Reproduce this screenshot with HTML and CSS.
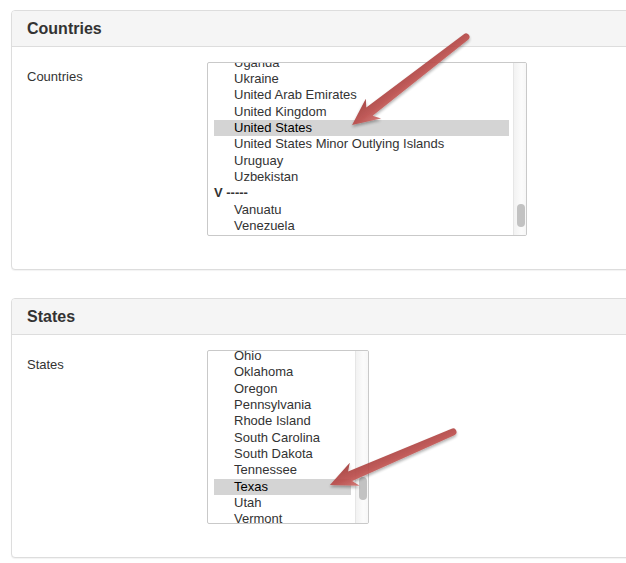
FILE: index.html
```html
<!DOCTYPE html>
<html>
<head>
<meta charset="utf-8">
<title>Countries and States</title>
<link rel="stylesheet" href="styles.css">
</head>
<body>
<div class="page">
  <section class="panel">
    <div class="panel-heading"><h3 class="panel-title">Countries</h3></div>
    <div class="panel-body">
      <div class="form-group">
        <label class="control-label">Countries</label>
        <div class="listbox listbox-wide">
          <div class="list list-countries">
            <div class="opt">Uganda</div>
            <div class="opt">Ukraine</div>
            <div class="opt">United Arab Emirates</div>
            <div class="opt">United Kingdom</div>
            <div class="opt selected">United States</div>
            <div class="opt">United States Minor Outlying Islands</div>
            <div class="opt">Uruguay</div>
            <div class="opt">Uzbekistan</div>
            <div class="group">V -----</div>
            <div class="opt">Vanuatu</div>
            <div class="opt">Venezuela</div>
            <div class="opt">Vietnam</div>
          </div>
          <div class="scrollbar"><div class="thumb thumb-countries"></div></div>
        </div>
      </div>
    </div>
  </section>

  <section class="panel">
    <div class="panel-heading"><h3 class="panel-title">States</h3></div>
    <div class="panel-body">
      <div class="form-group">
        <label class="control-label">States</label>
        <div class="listbox listbox-narrow">
          <div class="list list-states">
            <div class="opt">Ohio</div>
            <div class="opt">Oklahoma</div>
            <div class="opt">Oregon</div>
            <div class="opt">Pennsylvania</div>
            <div class="opt">Rhode Island</div>
            <div class="opt">South Carolina</div>
            <div class="opt">South Dakota</div>
            <div class="opt">Tennessee</div>
            <div class="opt selected">Texas</div>
            <div class="opt">Utah</div>
            <div class="opt">Vermont</div>
            <div class="opt">Virginia</div>
          </div>
          <div class="scrollbar"><div class="thumb thumb-states"></div></div>
        </div>
      </div>
    </div>
  </section>
</div>

<svg class="arrows" width="626" height="563" viewBox="0 0 626 563" xmlns="http://www.w3.org/2000/svg">
  <defs>
    <linearGradient id="ag" x1="0" y1="0" x2="0" y2="1">
      <stop offset="0" stop-color="#cf6f6c"/>
      <stop offset="0.45" stop-color="#bb4d4b"/>
      <stop offset="1" stop-color="#a13b39"/>
    </linearGradient>
    <filter id="sh" x="-20%" y="-20%" width="140%" height="140%">
      <feDropShadow dx="0" dy="2" stdDeviation="1.6" flood-color="#000" flood-opacity="0.35"/>
    </filter>
  </defs>
  <g filter="url(#sh)" opacity="0.92">
    <path transform="translate(466 37) rotate(142.3)" fill="url(#ag)"
      d="M0 -3.5 L122 -5.2 L117 -12.5 L144 0 L117 12.5 L122 5.2 L0 3.5 A3.5 3.5 0 0 1 0 -3.5 Z"/>
  </g>
  <g filter="url(#sh)" opacity="0.92">
    <path transform="translate(453 432) rotate(156.7)" fill="url(#ag)"
      d="M0 -3.5 L112 -5.2 L107 -12.5 L134 0 L107 12.5 L112 5.2 L0 3.5 A3.5 3.5 0 0 1 0 -3.5 Z"/>
  </g>
</svg>
</body>
</html>
```

FILE: styles.css
```css
html, body {
  margin: 0;
  padding: 0;
  overflow: hidden;
  background: #ffffff;
}

body {
  font-family: "Liberation Sans", Arial, Helvetica, sans-serif;
  font-size: 13px;
  color: #333333;
  position: relative;
  width: 626px;
  height: 563px;
}

.page {
  padding: 10px 0 0 11px;
  display: flex;
  flex-direction: column;
  gap: 28px;
}

.panel {
  width: 640px;
  border: 1px solid #dddddd;
  border-radius: 4px;
  background: #ffffff;
  box-shadow: 0 1px 1px rgba(0, 0, 0, 0.05);
}

.panel-heading {
  height: 35px;
  background: #f5f5f5;
  border-bottom: 1px solid #dddddd;
  border-radius: 3px 3px 0 0;
  padding: 0 15px;
  display: flex;
  align-items: center;
}

.panel-title {
  margin: 0;
  font-size: 16px;
  font-weight: bold;
  color: #333333;
  line-height: 18px;
  padding-top: 1px;
}

.panel-body {
  padding: 15px 15px 33px 15px;
}

.form-group {
  display: flex;
  align-items: flex-start;
}

.control-label {
  width: 180px;
  flex: none;
  padding-top: 6px;
  line-height: 18px;
  font-size: 13px;
  color: #333333;
}

.listbox {
  height: 172px;
  border: 1px solid #c9c9c9;
  border-radius: 2px;
  display: flex;
  overflow: hidden;
  background: #ffffff;
}

.listbox-wide { width: 318px; }
.listbox-narrow { width: 160px; }

.list {
  flex: 1;
  padding: 0 4px 0 6px;
  overflow: hidden;
}

.list-countries { margin-top: -8.5px; }
.list-states { margin-top: -3px; }

.opt,
.group {
  height: 16.35px;
  line-height: 16.35px;
  white-space: nowrap;
  font-size: 13px;
}

.opt {
  padding-left: 20px;
  color: #333333;
}

.group {
  font-weight: bold;
  color: #333333;
}

.opt.selected {
  background: #d4d4d4;
  color: #000000;
}

.scrollbar {
  width: 12px;
  flex: none;
  border-left: 1px solid #e6e6e6;
  background: linear-gradient(to right, #f2f2f2, #fbfbfb 60%, #f7f7f7);
  display: flex;
  flex-direction: column;
  align-items: center;
}

.thumb {
  width: 8px;
  height: 23px;
  border-radius: 4px;
  background: #c2c2c2;
  margin-left: 2px;
}

.thumb-countries { margin-top: 141px; }
.thumb-states { margin-top: 126px; }

.arrows {
  position: absolute;
  left: 0;
  top: 0;
  pointer-events: none;
}
```
